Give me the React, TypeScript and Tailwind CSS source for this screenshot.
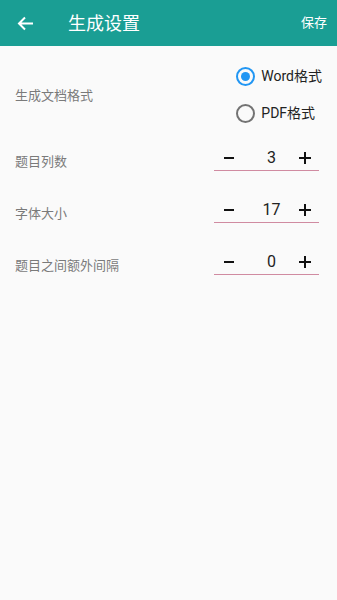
import { useState } from "react";

const font = { fontFamily: '"Roboto", "Noto Sans CJK SC", sans-serif' };

function Radio({ checked, label, onClick }: { checked: boolean; label: string; onClick: () => void }) {
  return (
    <button onClick={onClick} className="flex h-[37px] items-center">
      <span
        className={`ml-[1px] flex h-[19px] w-[19px] items-center justify-center rounded-full border-2 ${
          checked ? "border-[#2196f3]" : "border-[#737373]"
        }`}
      >
        {checked && <span className="h-[9px] w-[9px] rounded-full bg-[#2196f3]" />}
      </span>
      <span className="ml-[6px] text-[14px] text-[#222]">{label}</span>
    </button>
  );
}

function Stepper({ value, onChange }: { value: number; onChange: (v: number) => void }) {
  return (
    <div className="mt-[9px] flex h-[26px] w-[105px] items-center border-b border-[#d08ba1]">
      <button onClick={() => onChange(Math.max(0, value - 1))} className="flex w-[30px] justify-center">
        <span className="block h-[2px] w-[10px] bg-[#111]" />
      </button>
      <span className="flex-1 pl-[8px] text-center text-[16px] text-[#222]">{value}</span>
      <button onClick={() => onChange(value + 1)} className="relative flex w-[28px] justify-center">
        <span className="relative block h-[12px] w-[12px]">
          <span className="absolute left-0 top-[5px] h-[2px] w-[12px] bg-[#111]" />
          <span className="absolute left-[5px] top-0 h-[12px] w-[2px] bg-[#111]" />
        </span>
      </button>
    </div>
  );
}

function Row({ label, value, onChange }: { label: string; value: number; onChange: (v: number) => void }) {
  return (
    <div className="flex h-[52px] items-start justify-between pl-[15px] pr-[18px]">
      <span className="mt-[18px] text-[13px] leading-[16px] text-[#7a7a7a]">{label}</span>
      <Stepper value={value} onChange={onChange} />
    </div>
  );
}

export default function App() {
  const [format, setFormat] = useState<"word" | "pdf">("word");
  const [cols, setCols] = useState(3);
  const [size, setSize] = useState(17);
  const [gap, setGap] = useState(0);

  return (
    <div className="min-h-[600px] w-[337px] bg-[#fafafa]" style={font}>
      <header className="flex h-[46px] items-center bg-[#1a9e94] text-white">
        <button className="ml-[17px] flex h-[20px] w-[18px] items-center">
          <svg width="17" height="15" viewBox="0 0 17 15" fill="none" stroke="white" strokeWidth="2">
            <path d="M16 7.5H2M8 1.5L2 7.5l6 6" />
          </svg>
        </button>
        <h1 className="ml-[33px] text-[18px] font-normal">生成设置</h1>
        <button className="ml-auto mr-[10px] text-[13px]">保存</button>
      </header>

      <div className="flex h-[90px] items-start justify-between pl-[15px] pr-[15px] pt-[12px]">
        <span className="mt-[30px] text-[13px] leading-[16px] text-[#7a7a7a]">生成文档格式</span>
        <div className="flex flex-col">
          <Radio checked={format === "word"} label="Word格式" onClick={() => setFormat("word")} />
          <Radio checked={format === "pdf"} label="PDF格式" onClick={() => setFormat("pdf")} />
        </div>
      </div>

      <Row label="题目列数" value={cols} onChange={setCols} />
      <Row label="字体大小" value={size} onChange={setSize} />
      <Row label="题目之间额外间隔" value={gap} onChange={setGap} />
    </div>
  );
}
